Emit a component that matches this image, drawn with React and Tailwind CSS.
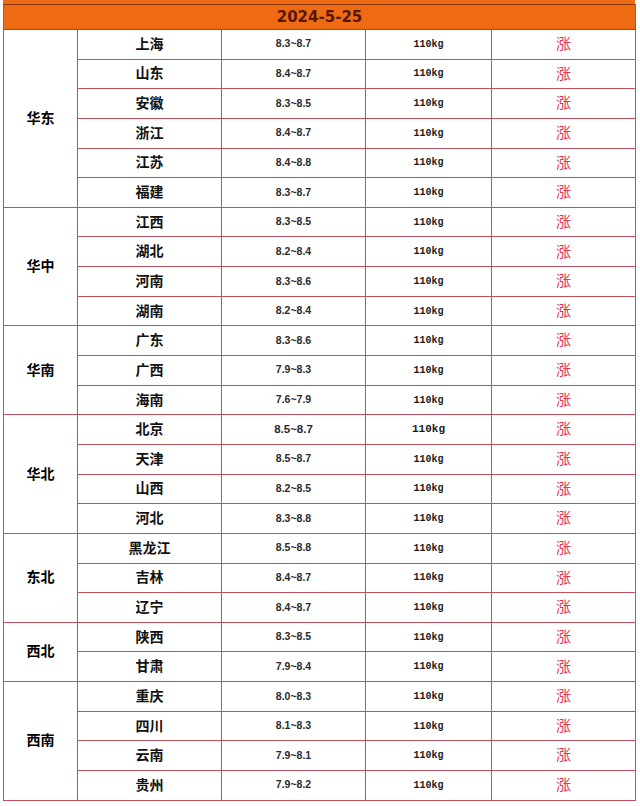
const groups = [
  {
    region: '华东',
    rows: [
      ['上海', '8.3~8.7'],
      ['山东', '8.4~8.7'],
      ['安徽', '8.3~8.5'],
      ['浙江', '8.4~8.7'],
      ['江苏', '8.4~8.8'],
      ['福建', '8.3~8.7'],
    ],
  },
  {
    region: '华中',
    rows: [
      ['江西', '8.3~8.5'],
      ['湖北', '8.2~8.4'],
      ['河南', '8.3~8.6'],
      ['湖南', '8.2~8.4'],
    ],
  },
  {
    region: '华南',
    rows: [
      ['广东', '8.3~8.6'],
      ['广西', '7.9~8.3'],
      ['海南', '7.6~7.9'],
    ],
  },
  {
    region: '华北',
    rows: [
      ['北京', '8.5~8.7', true],
      ['天津', '8.5~8.7'],
      ['山西', '8.2~8.5'],
      ['河北', '8.3~8.8'],
    ],
  },
  {
    region: '东北',
    rows: [
      ['黑龙江', '8.5~8.8'],
      ['吉林', '8.4~8.7'],
      ['辽宁', '8.4~8.7'],
    ],
  },
  {
    region: '西北',
    rows: [
      ['陕西', '8.3~8.5'],
      ['甘肃', '7.9~8.4'],
    ],
  },
  {
    region: '西南',
    rows: [
      ['重庆', '8.0~8.3'],
      ['四川', '8.1~8.3'],
      ['云南', '7.9~8.1'],
      ['贵州', '7.9~8.2'],
    ],
  },
];

const cjk = "font-['Liberation_Sans','Noto_Sans_CJK_SC',sans-serif]";

export default function App() {
  return (
    <div className="w-[640px] h-[806px] bg-white">
      <div className="ml-[3px] w-[632px] h-[4px] bg-[#ee6b14]" />
      <table className="ml-[3px] w-[632px] table-fixed border-collapse">
        <colgroup>
          <col className="w-[74px]" />
          <col className="w-[144px]" />
          <col className="w-[144px]" />
          <col className="w-[126px]" />
          <col className="w-[144px]" />
        </colgroup>
        <thead>
          <tr className="h-[25px]">
            <th
              colSpan={5}
              className="bg-[#ee6b14] border-t border-t-[#8a3a10] border-b border-b-[#9c4a2a] border-x border-x-[#9c5a4a] text-center text-[15px] font-bold text-[#5a1608] font-['DejaVu_Sans',sans-serif] p-0"
            >
              2024-5-25
            </th>
          </tr>
        </thead>
        <tbody>
          {groups.map((g) =>
            g.rows.map(([name, price, big], i) => (
              <tr key={name} className="h-[29.65px]">
                {i === 0 && (
                  <td
                    rowSpan={g.rows.length}
                    className={`border border-[#c4505e] text-center text-[14px] font-bold text-black p-0 ${cjk}`}
                  >
                    {g.region}
                  </td>
                )}
                <td className={`border border-[#c4505e] text-center text-[14px] font-bold text-[#111] p-0 ${cjk}`}>
                  {name}
                </td>
                <td
                  className={`border border-[#c4505e] text-center font-bold text-[#2a2a2a] p-0 font-['Liberation_Sans',sans-serif] ${
                    big ? 'text-[11.5px]' : 'text-[10.5px]'
                  }`}
                >
                  {price}
                </td>
                <td
                  className={`border border-[#c4505e] text-center font-bold text-[#1a1a1a] p-0 font-['Liberation_Mono',monospace] ${
                    big ? 'text-[11px]' : 'text-[10px]'
                  }`}
                >
                  110kg
                </td>
                <td className={`border border-[#c4505e] text-center text-[15px] text-[#e23358] p-0 ${cjk}`}>
                  涨
                </td>
              </tr>
            ))
          )}
        </tbody>
      </table>
    </div>
  );
}
